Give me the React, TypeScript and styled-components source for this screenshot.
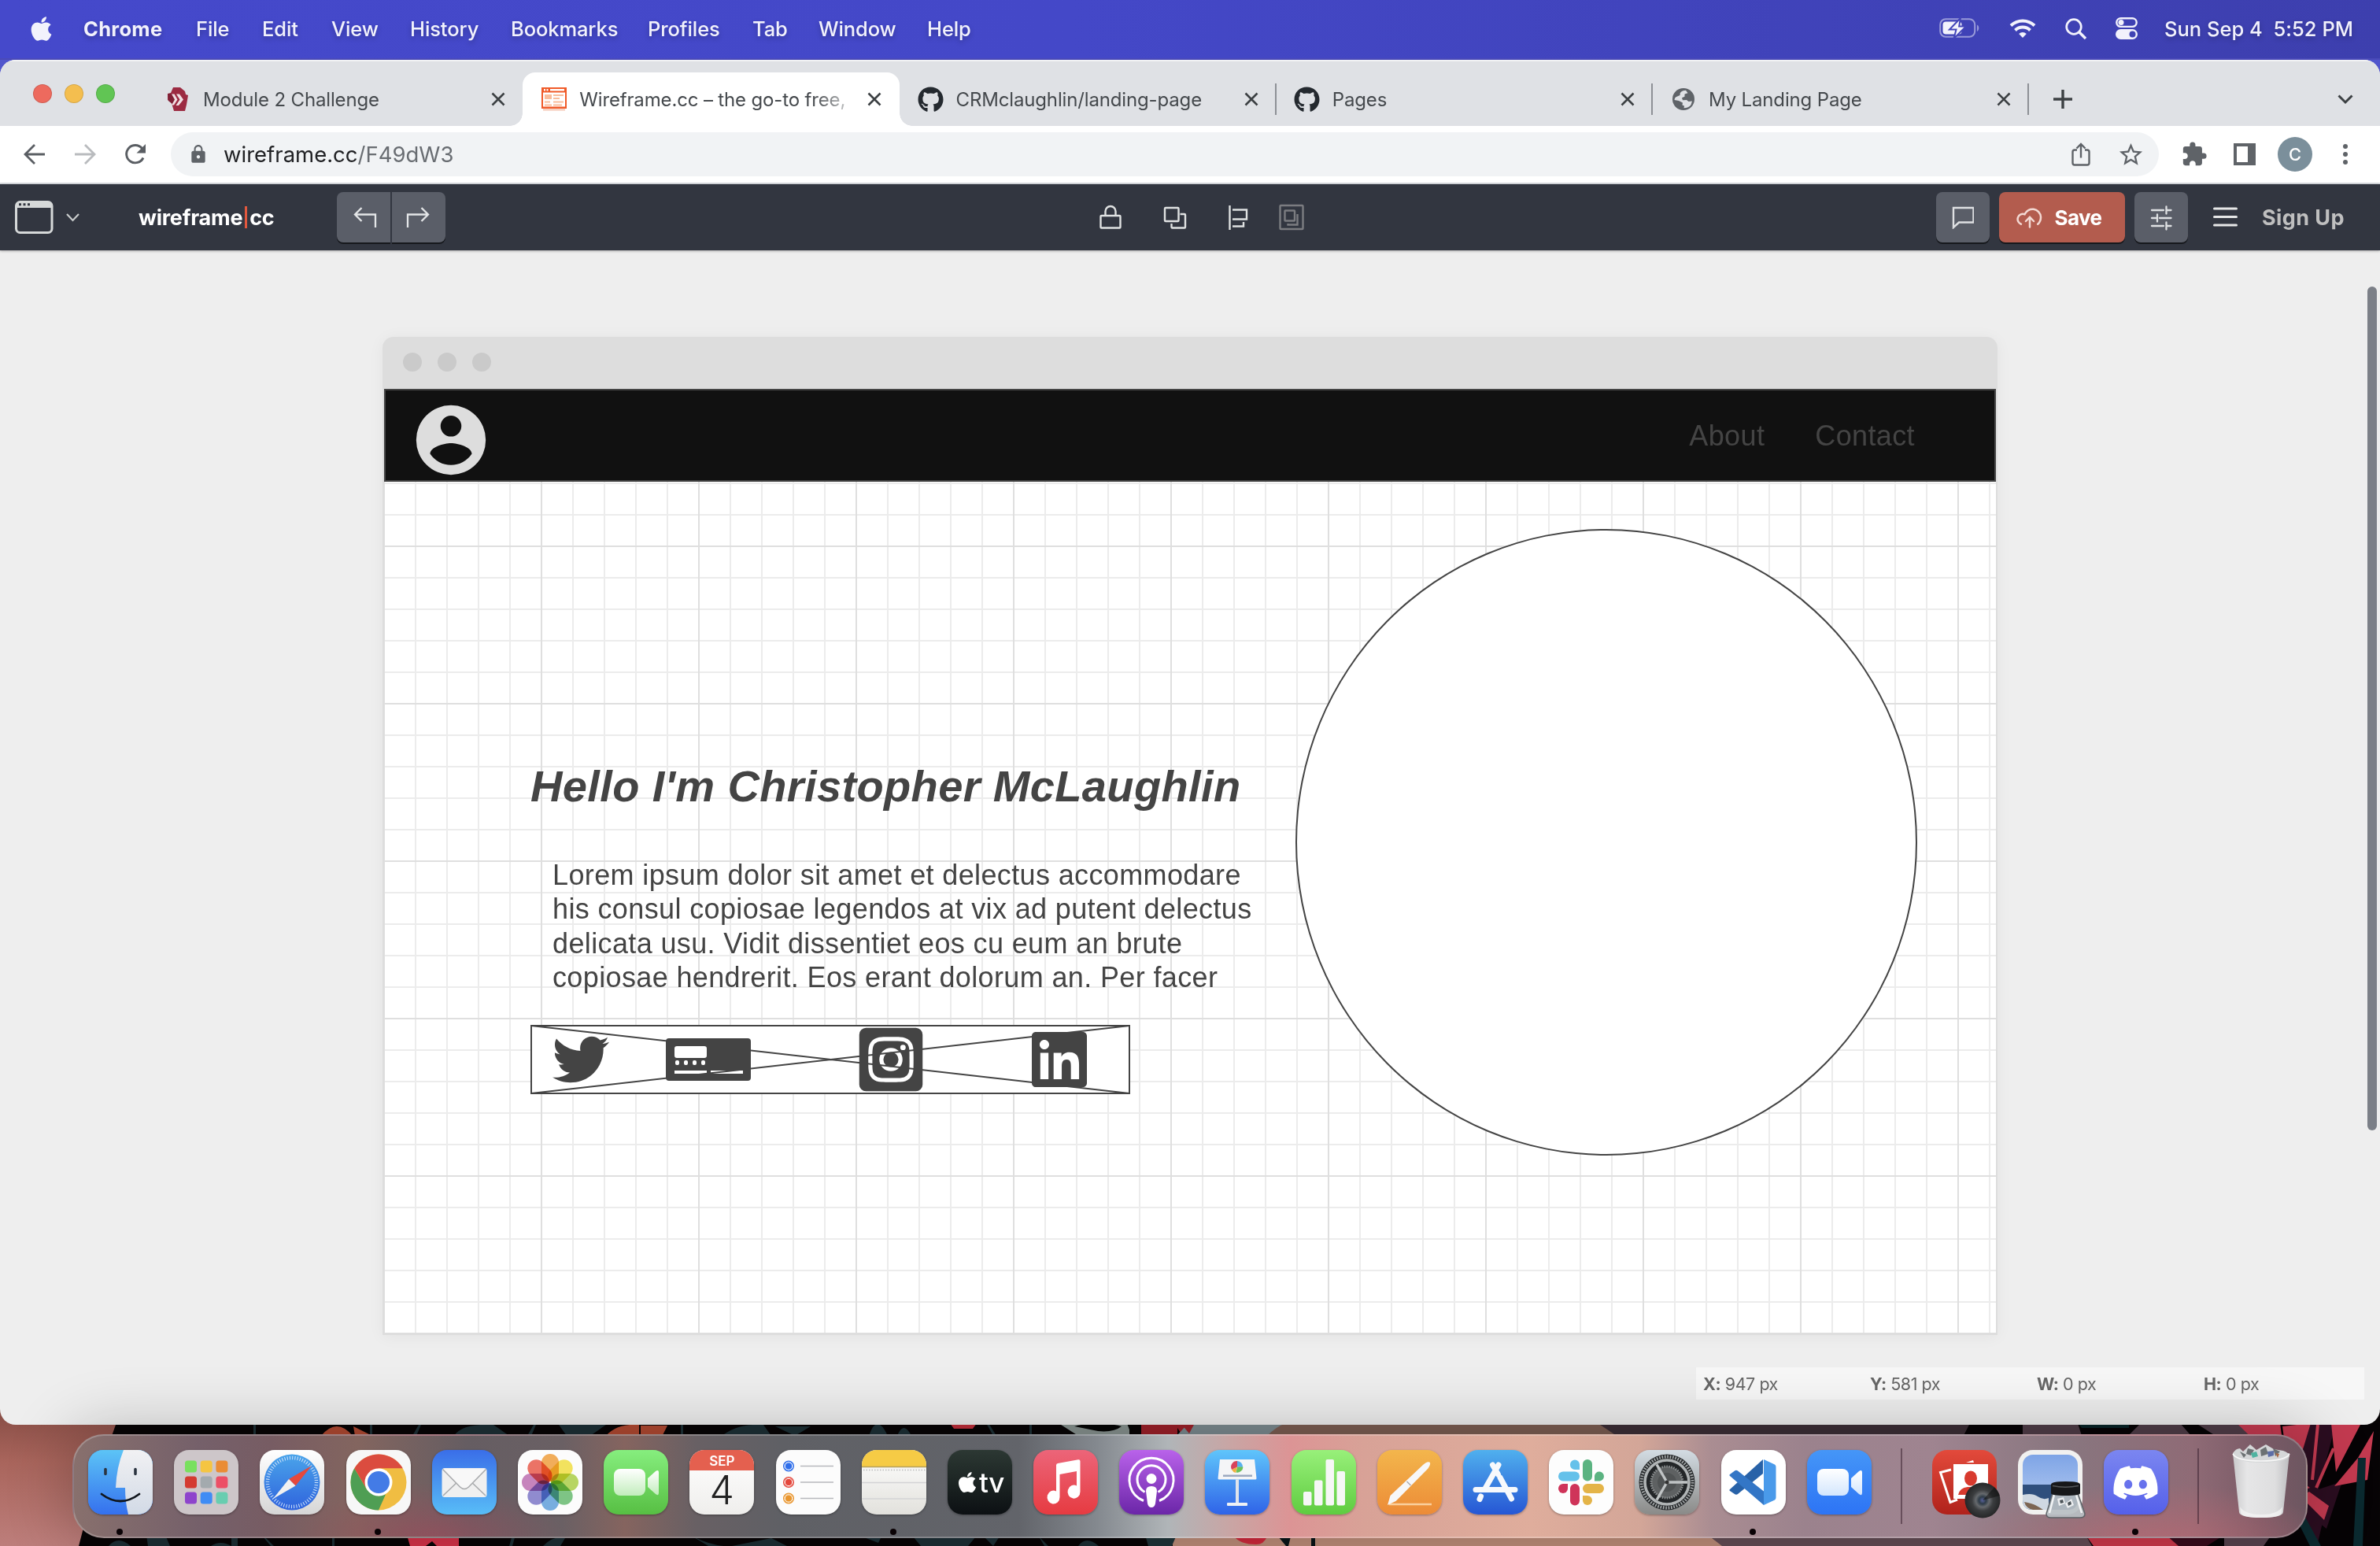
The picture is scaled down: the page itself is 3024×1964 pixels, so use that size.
import React from "react";
import styled, { createGlobalStyle } from "styled-components";
import { FaApple, FaGithub, FaTwitter, FaLinkedin, FaInstagramSquare, FaDiscord } from "react-icons/fa";
import { MdExtension, MdStarOutline, MdLock } from "react-icons/md";

const UI = `Inter, "Noto Sans", sans-serif`;
const ARIAL = `"Liberation Sans", Arial, sans-serif`;

const Global = createGlobalStyle`
  * { box-sizing: border-box; }
  html, body { margin: 0; padding: 0; overflow: hidden; }
  body { font-family: ${UI}; width: 3024px; height: 1964px; }
  svg { display: block; flex: none; }
`;

const Desktop = styled.div`
  position: relative;
  display: flex;
  flex-direction: column;
  width: 3024px;
  height: 1964px;
  overflow: hidden;
  background: #5055cc;
`;

const Wallpaper = styled.svg`
  position: absolute;
  left: 0;
  bottom: 0;
`;

/* ---------- menu bar ---------- */

const MenuBar = styled.header`
  display: flex;
  align-items: center;
  height: 76px;
  padding: 0 34px 2px 35px;
  flex: none;
  color: #f2f2fc;
  background: linear-gradient(90deg, #4549cb 0%, #4448c8 45%, #3d3fae 100%);
  border-bottom: 2px solid #4a4ab8;
  text-shadow: 0 3px 6px rgba(0, 0, 0, 0.25);
  font-size: 25.5px;
  font-weight: 500;
`;

const AppleSlot = styled.div`
  width: 71px;
`;

const MenuItem = styled.div<{ $w: number; $bold?: boolean }>`
  width: ${(p) => p.$w}px;
  font-weight: ${(p) => (p.$bold ? 700 : 500)};
  letter-spacing: ${(p) => (p.$bold ? "0.3px" : "-0.1px")};
  white-space: nowrap;
`;

const MenuSpacer = styled.div`
  flex: 1;
`;

const Tray = styled.div`
  display: flex;
  align-items: center;
  gap: 37px;
`;

const Clock = styled.div`
  width: 240px;
  margin-left: -3px;
  letter-spacing: 0.02px;
  white-space: pre;
`;

/* ---------- browser window ---------- */

const Browser = styled.section`
  position: relative;
  display: flex;
  flex-direction: column;
  height: 1734px;
  flex: none;
  overflow: hidden;
  border-radius: 20px;
  background: #eeeeee;
`;

const TabStrip = styled.div`
  display: flex;
  height: 84px;
  flex: none;
  background: #dfe1e5;
  border-top: 2px solid #f1f2f4;
  padding-top: 14px;
`;

const Lights = styled.div`
  display: flex;
  gap: 16px;
  width: 186px;
  padding: 15px 0 0 42px;
`;

const Light = styled.div<{ $c: string }>`
  width: 24px;
  height: 24px;
  border-radius: 50%;
  background: ${(p) => p.$c};
  border: 1px solid rgba(0, 0, 0, 0.12);
`;

const Tab = styled.div<{ $active?: boolean; $sep?: boolean }>`
  position: relative;
  display: flex;
  align-items: center;
  width: 478.25px;
  height: 68px;
  padding: 0 20px 0 23px;
  border-radius: 16px 16px 0 0;
  background: ${(p) => (p.$active ? "#fff" : "transparent")};
  color: #45494d;
  font-size: 24px;

  &::before,
  &::after {
    content: "";
    display: ${(p) => (p.$active || p.$sep ? "block" : "none")};
    position: absolute;
    bottom: ${(p) => (p.$active ? 0 : 14)}px;
    width: ${(p) => (p.$active ? 16 : 2)}px;
    height: ${(p) => (p.$active ? 16 : 40)}px;
  }
  &::before {
    left: -16px;
    background: ${(p) => (p.$active ? "radial-gradient(circle at 0 0, transparent 15.5px, #fff 16px)" : "none")};
  }
  &::after {
    right: ${(p) => (p.$active ? "-16px" : "-1px")};
    background: ${(p) => (p.$active ? "radial-gradient(circle at 100% 0, transparent 15.5px, #fff 16px)" : "#8d9096")};
  }
`;

const Favicon = styled.div`
  display: flex;
  justify-content: center;
  width: 34px;
  margin-right: 15px;
`;

const TabTitle = styled.div<{ $fade?: boolean }>`
  width: 345px;
  white-space: nowrap;
  letter-spacing: -0.15px;
  ${(p) => p.$fade && "-webkit-mask-image: linear-gradient(90deg, #000 86%, rgba(0, 0, 0, 0.3) 99%);"}
`;

const TabClose = styled.div`
  margin-left: 21px;
`;

const StripTail = styled.div`
  display: flex;
  flex: 1;
  justify-content: space-between;
  align-items: center;
  height: 68px;
  padding: 0 34px 0 32px;
`;

const NavBar = styled.div`
  display: flex;
  align-items: center;
  height: 74px;
  flex: none;
  background: #fff;
  border-bottom: 2px solid #d9dce0;
`;

const NavButtons = styled.div`
  display: flex;
  gap: 32px;
  width: 217px;
  padding-left: 28px;
`;

const Omnibox = styled.div`
  display: flex;
  align-items: center;
  width: 2526px;
  height: 56px;
  padding: 0 18px 0 22px;
  border-radius: 28px;
  background: #f1f3f5;
`;

const Url = styled.div`
  flex: 1;
  margin-left: 19px;
  font-size: 27.5px;
  color: #202124;
  letter-spacing: 0;
  span { color: #696d72; }
`;

const OmniActions = styled.div`
  display: flex;
  align-items: center;
  gap: 29px;
`;

const Extensions = styled.div`
  display: flex;
  align-items: center;
  gap: 26px;
  margin-left: 28px;
`;

const Avatar = styled.div`
  display: flex;
  align-items: center;
  justify-content: center;
  width: 44px;
  height: 44px;
  border-radius: 50%;
  background: #7b8f9b;
  color: #fff;
  font: 500 22px ${UI};
`;

/* ---------- wireframe.cc toolbar ---------- */

const AppBar = styled.div`
  display: flex;
  align-items: center;
  height: 84px;
  flex: none;
  padding: 0 46px 0 19px;
  background: #323640;
  box-shadow: 0 1px 3px rgba(0, 0, 0, 0.3);
  z-index: 1;
`;

const Cluster = styled.div<{ $ml?: number; $gap?: number }>`
  display: flex;
  align-items: center;
  margin-left: ${(p) => p.$ml || 0}px;
  gap: ${(p) => p.$gap || 0}px;
`;

const Brand = styled.div`
  display: flex;
  align-items: center;
  width: 252px;
  margin-left: 75px;
  color: #fff;
  font-size: 27px;
  font-weight: 700;
  letter-spacing: -0.25px;
`;

const Caret = styled.span`
  width: 3px;
  height: 28px;
  margin: 0 3px;
  background: #e2583e;
`;

const ToolButton = styled.div<{ $w: number; $bg?: string; $side?: "l" | "r"; $nudge?: number }>`
  display: flex;
  align-items: center;
  justify-content: center;
  gap: 15px;
  width: ${(p) => p.$w}px;
  height: 64px;
  padding-left: ${(p) => Math.max(p.$nudge || 0, 0)}px;
  padding-right: ${(p) => Math.max(-(p.$nudge || 0), 0)}px;
  background: ${(p) => p.$bg || "#5a5e68"};
  border-radius: ${(p) => (p.$side === "l" ? "8px 0 0 8px" : p.$side === "r" ? "0 8px 8px 0" : "8px")};
  box-shadow: 0 2px 0 #16181c;
  color: #fff;
  font-size: 26px;
  font-weight: 700;
  letter-spacing: -0.6px;
`;

const SignUp = styled.div`
  width: 104px;
  color: #bfbfbf;
  font-size: 27px;
  font-weight: 700;
  letter-spacing: 0.4px;
  white-space: nowrap;
`;

/* ---------- work area ---------- */

const Workspace = styled.div`
  position: relative;
  flex: 1;
  padding: 110px 486px 0 486px;
`;

const Frame = styled.div`
  width: 2052px;
  height: 1268px;
  border-radius: 14px 14px 0 0;
  background: #dddddd;
  box-shadow: 0 2px 20px rgba(0, 0, 0, 0.05);
  padding: 0 2px 2px;
`;

const FrameHead = styled.div`
  display: flex;
  align-items: center;
  gap: 20px;
  height: 66px;
  padding: 0 0 2px 24px;
`;

const FrameDot = styled.div`
  width: 24px;
  height: 24px;
  border-radius: 50%;
  background: #cacaca;
`;

const Canvas = styled.div`
  position: relative;
  height: 1200px;
  background-color: #fff;
  background-image: linear-gradient(90deg, #dfdfdf 2px, transparent 2px),
    linear-gradient(#dfdfdf 2px, transparent 2px), linear-gradient(90deg, #ececec 2px, transparent 2px),
    linear-gradient(#ececec 2px, transparent 2px);
  background-size: 200px 200px, 200px 200px, 40px 40px, 40px 40px;
  background-position: -1px -1px;
`;

const NavBlock = styled.div`
  position: relative;
  display: flex;
  align-items: center;
  height: 118px;
  padding: 12px 101px 0 30px;
  border: 2px solid #444;
  background: #111;
`;

const NavLinks = styled.div`
  display: flex;
  flex: 1;
  justify-content: flex-end;
  gap: 64px;
  padding-bottom: 11px;
  font: 36px ${ARIAL};
  letter-spacing: 0.38px;
  color: #444;
`;

const Placed = styled.div<{ $x: number; $y: number; $w: number; $h: number }>`
  position: absolute;
  left: ${(p) => p.$x}px;
  top: ${(p) => p.$y}px;
  width: ${(p) => p.$w}px;
  height: ${(p) => p.$h}px;
  color: #444;
`;

const Heading = styled.h1`
  margin: 0;
  font: italic bold 56px/64px ${ARIAL};
  letter-spacing: 0.37px;
  white-space: nowrap;
`;

const Copy = styled.p`
  margin: 0;
  font: 36px/43.3px ${ARIAL};
  letter-spacing: 0.37px;
  white-space: nowrap;
`;

const Portrait = styled.div`
  width: 100%;
  height: 100%;
  border: 2px solid #444;
  border-radius: 50%;
  background: #fff;
`;

const ScrollThumb = styled.div`
  position: absolute;
  right: 4px;
  top: 46px;
  width: 12px;
  height: 1072px;
  border-radius: 6px;
  background: #7b7f87;
`;

const StatusBar = styled.div`
  position: absolute;
  right: 20px;
  top: 1419px;
  display: flex;
  align-items: center;
  width: 849px;
  height: 41px;
  padding-left: 9px;
  background: rgba(255, 255, 255, 0.5);
  color: #666;
  font-size: 21.5px;
`;

const Stat = styled.div`
  width: 212px;
  flex: none;
  letter-spacing: -0.45px;
  b { font-weight: 700; }
  &:last-child { width: 180px; }
`;

/* ---------- dock ---------- */

const DockArea = styled.div`
  position: relative;
  display: flex;
  justify-content: center;
  flex: 1;
  padding: 12px 0 10px;
`;

const DockShelf = styled.div`
  display: flex;
  align-items: flex-start;
  gap: 27.2px;
  width: 2840px;
  height: 132px;
  padding: 18px 0 0 18px;
  border-radius: 40px;
  border: 2px solid rgba(255, 255, 255, 0.22);
  background: radial-gradient(ellipse 170px 70px at 455px 130px, rgba(150, 78, 92, 0.8), transparent),
    radial-gradient(ellipse 240px 80px at 2640px 140px, rgba(185, 104, 114, 0.8), transparent),
    linear-gradient(90deg, #88706d 0, #75606a 160px, #775c63 250px, #83655f 360px, #655d62 500px, #6a6064 620px,
      #85645f 700px, #686064 790px, #5f6065 900px, #62646a 1200px, #84898f 1300px, #b0b5b8 1390px, #c9a5a4 1470px,
      #dc9495 1545px, #d8a297 1640px, #dfad9c 1850px, #d3a698 1990px, #aa8d92 2080px, #9b828d 2200px, #9f8490 2360px,
      #88767f 2530px, #8f6b76 2690px, #7a5a66 2780px, #6c5660 2840px);
  box-shadow: 0 0 80px 6px rgba(0, 0, 0, 0.24);
`;

const DockSlot = styled.div<{ $running?: boolean }>`
  position: relative;
  width: 82px;
  height: 110px;
  flex: none;
  &::after {
    content: "";
    display: ${(p) => (p.$running ? "block" : "none")};
    position: absolute;
    left: 36px;
    bottom: 2px;
    width: 8px;
    height: 8px;
    border-radius: 50%;
    background: #0a0205;
  }
`;

const Tile = styled.div<{ $bg: string }>`
  display: flex;
  align-items: center;
  justify-content: center;
  width: 82px;
  height: 82px;
  border-radius: 19px;
  background: ${(p) => p.$bg};
  overflow: hidden;
  box-shadow: 0 1px 3px rgba(0, 0, 0, 0.35);
  color: #fff;
`;

const DockRule = styled.div`
  width: 2px;
  height: 96px;
  flex: none;
  margin: -2px 10.2px 0;
  background: rgba(50, 25, 40, 0.5);
`;

const Calendar = styled.div`
  display: flex;
  flex-direction: column;
  align-items: center;
  width: 82px;
  height: 82px;
`;

const Month = styled.div`
  width: 82px;
  height: 26px;
  padding-top: 2px;
  background: #e4604f;
  color: #fff;
  font: 600 17px/24px ${UI};
  text-align: center;
`;

const Day = styled.div`
  color: #222;
  font: 300 50px/51px ${UI};
`;

const TvMark = styled.div`
  display: flex;
  align-items: center;
  font: 500 35px/40px ${UI};
  letter-spacing: -0.5px;
`;

/* ---------- small glyphs ---------- */

const CloseX = () => (
  <svg width="18" height="18" viewBox="0 0 18 18" stroke="#3c4043" strokeWidth="2.6" fill="none">
    <path d="M1.5 1.5 16.5 16.5M16.5 1.5 1.5 16.5" />
  </svg>
);

const Battery = () => (
  <svg width="52" height="28" viewBox="0 0 52 28">
    <rect x="1.2" y="2.2" width="44" height="22.6" rx="7" fill="none" stroke="#f2f2fc" strokeOpacity=".5" strokeWidth="2" />
    <path d="M48 9.500c3 1.200 3 7 0 8.500z" fill="#f2f2fc" fillOpacity=".5" />
    <rect x="4.500" y="5.500" width="24" height="16" rx="4" fill="#f2f2fc" />
    <path d="M27 1 13 15.500h8.500L18.500 27 34 11.500h-8.800z" fill="#f2f2fc" stroke="#4244b8" strokeWidth="2" />
  </svg>
);

const Wifi = () => (
  <svg width="34" height="26" viewBox="0 0 34 26" fill="none" stroke="#f2f2fc" strokeWidth="4">
    <path d="M2 9.500a21.500 21.500 0 0 1 30 0" />
    <path d="M7.500 15.500a13.500 13.500 0 0 1 19 0" />
    <path d="m17 25-4.800-5a6.800 6.800 0 0 1 9.600 0z" fill="#f2f2fc" stroke="none" />
  </svg>
);

const Search = () => (
  <svg width="27" height="27" viewBox="0 0 27 27" fill="none" stroke="#f2f2fc" strokeWidth="2.700">
    <circle cx="11" cy="11" r="9.300" />
    <path d="m17.500 17.500 8.500 8.500" strokeWidth="3.400" />
  </svg>
);

const Control = () => (
  <svg width="28" height="28" viewBox="0 0 28 28">
    <rect x="1.300" y="1.300" width="25.400" height="10.600" rx="5.300" fill="none" stroke="#f2f2fc" strokeWidth="2.400" />
    <circle cx="7" cy="6.600" r="3.500" fill="#f2f2fc" />
    <rect x="0" y="15" width="28" height="13" rx="6.500" fill="#f2f2fc" />
    <circle cx="21.500" cy="21.500" r="4" fill="#4043b4" />
  </svg>
);

const ModuleIcon = () => (
  <svg width="28" height="30" viewBox="0 0 28 30">
    <path d="M8 0h9l6 5 1 4 3 1-2 12-2 8H9L6 20 1 16V8l4-1z" fill="#9c2b42" />
    <path d="M1 8h6l6 7-6 6-5-4z" fill="#7f2136" />
    <path d="M6 8.500h3.500l4 7L9 22.500H6l4-7zM12 8.500h4l5 7-6 7.500h-3.500l5-7.500z" fill="#f0dfe3" />
  </svg>
);

const WireIcon = () => (
  <svg width="32" height="30" viewBox="0 0 32 30">
    <rect x="1" y="1" width="30" height="25" fill="#fff" stroke="#f05a28" strokeWidth="2" />
    <rect width="32" height="6.500" fill="#f05a28" />
    <path d="M3 2h2v2.500H3zM6.500 2h2v2.500h-2zM11 2h18v2.500H11z" fill="#fff" />
    <path d="M4 9h9v6H4zM15 9h13v2H15zM15 13h8v2h-8zM4 17.500h7v2H4zM15 17.500h13v2H15zM4 21.500h9v2H4zM15 21.500h11v2H15z" fill="#f9bd9c" />
    <rect x="0" y="24.500" width="32" height="2.500" fill="#f05a28" />
    <rect x="2" y="27.500" width="28" height="2" fill="#f5c6b2" />
  </svg>
);

const Globe = () => (
  <svg width="28" height="28" viewBox="0 0 28 28">
    <circle cx="14" cy="14" r="14" fill="#5f6368" />
    <path
      d="M17 2.800Q9 3 9.500 9l-4.500 2q-2 .5-2.500 4l5.500 1 5 2.500-.500 3 2.500 1-.5 2.700q6 0 9-4l1.500-4.700-4.500.5-2.500-2-5 .200-1-3 3.500-1.500V7.500l4-1.200z"
      fill="#dfe1e5"
    />
  </svg>
);

const BackArrow = ({ c, flip }: { c: string; flip?: boolean }) => (
  <svg width="32" height="32" viewBox="0 0 32 32" fill="none" stroke={c} strokeWidth="2.800" transform={flip ? "scale(-1 1)" : undefined}>
    <path d="M29 16H4.500M16 4 4 16l12 12" />
  </svg>
);

const Reload = () => (
  <svg width="32" height="32" viewBox="0 0 32 32" fill="none" stroke="#5a5e63" strokeWidth="2.900">
    <path d="M26 20.500A11.200 11.200 0 1 1 24.500 8.500" />
    <path d="M29 3v11.500H17.500z" fill="#5a5e63" stroke="none" />
  </svg>
);

const Share = () => (
  <svg width="34" height="34" viewBox="0 0 34 34" fill="none" stroke="#5f6368" strokeWidth="2.400">
    <path d="M12 11.500H9a2.500 2.500 0 0 0-2.500 2.500v14A2.500 2.500 0 0 0 9 30.500h16a2.500 2.500 0 0 0 2.500-2.500V14a2.500 2.500 0 0 0-2.500-2.500h-3M17 21.500V4.500M11.500 9.500 17 4l5.500 5.500" />
  </svg>
);

const SidePanel = () => (
  <svg width="28" height="28" viewBox="0 0 28 28">
    <path d="M0 0h28v28H0zM4 4v20h14V4z" fill="#5f6368" fillRule="evenodd" />
  </svg>
);

const Dots = () => (
  <svg width="6" height="28" viewBox="0 0 6 28" fill="#5f6368">
    <circle cx="3" cy="4" r="3" />
    <circle cx="3" cy="14" r="3" />
    <circle cx="3" cy="24" r="3" />
  </svg>
);

const FrameIcon = () => (
  <svg width="49" height="42" viewBox="0 0 49 42">
    <rect x="1.500" y="1.500" width="45.500" height="39" rx="5" fill="none" stroke="#d6d9d9" strokeWidth="3" />
    <path d="M1 8a6 6 0 0 1 5-7h36a6 6 0 0 1 6 7v1H1z" fill="#d6d9d9" />
    <path d="M5 3.200h3v3H5zM10.500 3.200h3v3h-3zM16 3.200h3v3h-3z" fill="#323640" />
  </svg>
);

const Undo = ({ flip }: { flip?: boolean }) => (
  <svg width="30" height="30" viewBox="0 0 30 30" fill="none" stroke="#e4e6e8" strokeWidth="2.300" transform={flip ? "scale(-1 1)" : undefined}>
    <path d="M10.500 3 2 11.500l8.500 8.500M2 11.500h26V28" />
  </svg>
);

const LockGlyph = () => (
  <svg width="30" height="32" viewBox="0 0 30 32" fill="none" stroke="#e0e2e2" strokeWidth="2.400">
    <rect x="2.500" y="14" width="25" height="15.500" rx="1" />
    <path d="M8.500 14V8.500a6.500 6.500 0 0 1 13 0V14" />
  </svg>
);

const LayersGlyph = () => (
  <svg width="30" height="32" viewBox="0 0 30 32" fill="none" stroke="#e0e2e2" strokeWidth="2.400">
    <rect x="2" y="4" width="17.500" height="17" rx="1" />
    <path d="M21.500 12H27q1 0 1 1v15.500q0 1-1 1H11.500q-1 0-1-1V24" />
  </svg>
);

const AlignGlyph = () => (
  <svg width="26" height="34" viewBox="0 0 26 34" fill="none" stroke="#e0e2e2" strokeWidth="2.400">
    <path d="M2.500 2v31M6 7.500h18v12H6M6 28.500h14V23" />
  </svg>
);

const GroupGlyph = () => (
  <svg width="32" height="34" viewBox="0 0 32 34" fill="none" stroke="#7b7c80" strokeWidth="2.400">
    <rect x="1.500" y="2" width="29" height="30" rx="1" />
    <rect x="7.500" y="8.500" width="12.500" height="13" rx=".5" />
    <path d="M23.500 13v13.500h-12V25" />
  </svg>
);

const CommentGlyph = () => (
  <svg width="28" height="30" viewBox="0 0 28 30" fill="none" stroke="#dfe1e3" strokeWidth="2.400">
    <path d="M2.500 3.500H28V22H9.500l-7 6.500z" transform="translate(-.5 -.5)" />
  </svg>
);

const CloudGlyph = () => (
  <svg width="34" height="30" viewBox="0 0 34 30" fill="none" stroke="#f3d9d3" strokeWidth="2.500" strokeLinecap="round">
    <path d="M6 23.700A6.600 6.600 0 0 1 10.500 11.200 10.700 10.700 0 0 1 31 14.500q.2 6-3.800 9.200M17 27.500V15M12 20l5-5.200 5 5.200" />
  </svg>
);

const SlidersGlyph = () => (
  <svg width="32" height="34" viewBox="0 0 32 34" fill="none" stroke="#dfe1e3" strokeWidth="2.300" strokeLinecap="round">
    <path d="M4 8h15M24 8h4.500M22.500 3.500v9M4 18h6M14 18h14.500M11 13.500v9M4 28h15M24 28h4.500M22.500 23.500v9" />
  </svg>
);

const Burger = () => (
  <svg width="31" height="26" viewBox="0 0 31 26" fill="#e6e7e7">
    <rect y="0.500" width="31" height="3" rx="1.500" />
    <rect y="11" width="31" height="3" rx="1.500" />
    <rect y="21.500" width="31" height="3" rx="1.500" />
  </svg>
);

const AccountBadge = () => (
  <svg width="106" height="106" viewBox="0 0 24 24" fill="#dddddd">
    <path
      fillRule="evenodd"
      d="M12 2a10 10 0 1 0 0 20 10 10 0 0 0 0-20zm0 3a3 3 0 1 1 0 6 3 3 0 0 1 0-6zm0 14.200a7.200 7.200 0 0 1-6-3.220c.03-1.990 4-3.080 6-3.080s5.970 1.090 6 3.080a7.200 7.200 0 0 1-6 3.220z"
    />
  </svg>
);

/* ---------- dock pictures ---------- */

const Finder = () => (
  <svg width="82" height="82" viewBox="0 0 82 82">
    <defs>
      <linearGradient id="fb" x2="0" y2="1"><stop stopColor="#5cc4f6" /><stop offset="1" stopColor="#3570ee" /></linearGradient>
      <linearGradient id="fw" x2="0" y2="1"><stop stopColor="#f1f1f3" /><stop offset="1" stopColor="#d2dae6" /></linearGradient>
    </defs>
    <rect width="82" height="82" fill="url(#fb)" />
    <path d="M45 0Q36 22 35 48h12q0 18 4 34h31V0z" fill="url(#fw)" />
    <path d="M22 24.500v6M60 24.500v6" stroke="#2b3440" strokeWidth="3.600" strokeLinecap="round" />
    <path d="M17 56q24 18 48 0" fill="none" stroke="#10151c" strokeWidth="2.800" strokeLinecap="round" />
  </svg>
);

const Launchpad = () => {
  const colors = ["#79e05e", "#f5c542", "#ea8c35", "#d43a30", "#a3aaae", "#ec4f66", "#8e44cc", "#3f8cf5", "#68cdb0"];
  return (
    <svg width="82" height="82" viewBox="0 0 82 82">
      {colors.map((c, i) => (
        <rect key={c} x={14 + (i % 3) * 19.700} y={13.500 + Math.floor(i / 3) * 20} width="15" height="15" rx="3.500" fill={c} />
      ))}
    </svg>
  );
};

const Safari = () => (
  <svg width="82" height="82" viewBox="0 0 82 82">
    <defs><linearGradient id="sf" x2="0" y2="1"><stop stopColor="#4aa4ea" /><stop offset="1" stopColor="#2f63dd" /></linearGradient></defs>
    <circle cx="41" cy="41" r="35.500" fill="url(#sf)" />
    <circle cx="41" cy="41" r="31" fill="none" stroke="#cfe3fa" strokeWidth="4.500" strokeDasharray="1 2.246" />
    <path d="M66 20 45.500 45.500 37 37z" fill="#e5483d" />
    <path d="M17 62 37 37l8.500 8.500z" fill="#f1f1f1" />
  </svg>
);

const Chrome = () => (
  <svg width="82" height="82" viewBox="0 0 82 82">
    <circle cx="41" cy="41" r="35.500" fill="#f0bd42" />
    <path d="M41 76.500A35.500 35.500 0 0 1 10.300 23.200L26 50l15 8.500 9-2z" fill="#4f9e54" />
    <path d="M10.300 23.200A35.500 35.500 0 0 1 71.700 23.200H41L25 48z" fill="#db4c3f" />
    <circle cx="41" cy="41" r="17.500" fill="#fff" />
    <circle cx="41" cy="41" r="14" fill="#437be6" />
  </svg>
);

const Mail = () => (
  <svg width="82" height="82" viewBox="0 0 82 82">
    <rect x="12.500" y="23" width="57" height="37" rx="3.500" fill="#f0f0f0" />
    <g fill="none" stroke="#a9abad" strokeWidth="1.600">
      <path d="m14 58 21-20M68 58 47 38" />
      <path d="m13.500 24.500 22 22.500q5.500 5 11 0l22-22.500" fill="#f8f8f8" />
    </g>
  </svg>
);

const Petal = styled.rect`
  mix-blend-mode: multiply;
`;

const Photos = () => {
  const petals = ["#f19e38", "#f3df3c", "#a9cf42", "#63bb6c", "#5b9edc", "#7a74c8", "#bd6bb0", "#ea5545"];
  return (
    <svg width="82" height="82" viewBox="0 0 82 82">
      {petals.map((c, i) => (
        <Petal key={c} x="30" y="5" width="22" height="35" rx="11" fill={c} fillOpacity=".82" transform={`rotate(${i * 45} 41 41)`} />
      ))}
    </svg>
  );
};

const Camera = ({ top, bottom, id }: { top: string; bottom: string; id: string }) => (
  <svg width="82" height="82" viewBox="0 0 82 82">
    <defs><linearGradient id={id} x2="0" y2="1"><stop stopColor={top} /><stop offset="1" stopColor={bottom} /></linearGradient></defs>
    <rect x="13" y="24" width="40" height="34" rx="8" fill={`url(#${id})`} />
    <path d="m56 36 10-9q4-3 4 2v25q0 5-4 2l-10-9z" fill={`url(#${id})`} />
  </svg>
);

const Reminders = () => (
  <svg width="82" height="82" viewBox="0 0 82 82">
    {["#2f6eea", "#e4473b", "#e9962f"].map((c, i) => (
      <g key={c}>
        <circle cx="16" cy={20.500 + i * 20.500} r="5.500" fill={c} />
        <circle cx="16" cy={20.500 + i * 20.500} r="4.700" fill="none" stroke="#fff" strokeWidth="1" />
        <circle cx="16" cy={20.500 + i * 20.500} r="6.400" fill="none" stroke={c} strokeWidth="1.300" />
        <path d={`M31 ${20.500 + i * 20.500}H73`} stroke="#b7b8bd" strokeWidth="1.500" />
      </g>
    ))}
  </svg>
);

const Notes = () => (
  <svg width="82" height="82" viewBox="0 0 82 82">
    <rect width="82" height="21" fill="#f6cb45" />
    <path d="M0 21.500h82" stroke="#b7a15c" strokeWidth="1.500" />
    <path d="M2 25.500h80" stroke="#bbb" strokeWidth="1.500" strokeDasharray="1.500 2" />
    <path d="M0 41.500h82M0 62h82" stroke="#d3d3d5" strokeWidth="1.500" />
  </svg>
);

const Music = () => (
  <svg width="82" height="82" viewBox="0 0 82 82" fill="#fff">
    <path d="M29 19.500q0-2 2-2.400l26-4.800q2.500-.3 2.500 2V53a8 8.500 0 1 1-4.500-7.500V27L33.500 31v29a8 8.500 0 1 1-4.500-7.600z" />
  </svg>
);

const Podcasts = () => (
  <svg width="82" height="82" viewBox="0 0 82 82" fill="none" stroke="#fff" strokeWidth="3">
    <path d="M31 64.500a28 28 0 1 1 20 0" />
    <path d="M32.500 53.500a18 18 0 1 1 17 0" />
    <circle cx="41" cy="36.500" r="6.500" fill="#fff" stroke="none" />
    <path d="M34 52q0-6 7-6t7 6l-2 16q-1 5-5 5t-5-5z" fill="#fff" stroke="none" />
  </svg>
);

const Keynote = () => (
  <svg width="82" height="82" viewBox="0 0 82 82">
    <path d="m19 12-2.500 24q0 1.500 1.500 1.500h46q1.500 0 1.500-1.500L63 12z" fill="#f4f5f7" />
    <path d="M23 31.500h37v2.500H23z" fill="#9ba9c0" />
    <path d="M41 21.500V14a7.500 7.500 0 0 1 7 8z" fill="#57b0ee" />
    <path d="M41 21.500h7.500a7.500 7.500 0 0 1-9 7z" fill="#6cc15a" />
    <path d="M41 21.500 39 29a7.500 7.500 0 0 1-5-4z" fill="#f0b03f" />
    <path d="M41 21.500 34 25a7.500 7.500 0 0 1 7-11z" fill="#d8435a" />
    <path d="M39 37.500h4V68h-4z" fill="#dfe4ec" />
    <rect x="28" y="67" width="26" height="4" rx="1" fill="#eef1f5" />
  </svg>
);

const Numbers = () => (
  <svg width="82" height="82" viewBox="0 0 82 82" fill="#f6f7f6">
    <rect x="15" y="53" width="10.500" height="17.500" rx="2" />
    <rect x="29" y="38.500" width="10.500" height="32" rx="2" />
    <rect x="43.500" y="12" width="10.500" height="58.500" rx="2" />
    <rect x="57.500" y="27" width="10.500" height="43.500" rx="2" />
  </svg>
);

const Pages = () => (
  <svg width="82" height="82" viewBox="0 0 82 82">
    <path d="M15 69h54" stroke="#f9cf9d" strokeWidth="2.500" />
    <path d="m13 70 3.500-12L58 19q5-5 8.500-3.500 2 2.500-2 8L23.500 65z" fill="#f7f7f8" />
    <path d="m37.500 40 5 5" stroke="#a9a9ad" strokeWidth="1.500" />
  </svg>
);

const AppStore = () => (
  <svg width="82" height="82" viewBox="0 0 82 82" fill="none" stroke="#f7f9fc" strokeWidth="7" strokeLinecap="round">
    <path d="M45 19 28 49M16 50.500h50M22.500 59l-1.500 3.500M37.500 19l7 12M47 35l14.500 27" />
  </svg>
);

const Slack = () => (
  <svg width="82" height="82" viewBox="0 0 82 82">
    <path d="M27 18.500a6 6 0 1 1 12 0V25h-6a6 6 0 0 1-6-6.500z" fill="#65c1ea" />
    <rect x="12" y="27.500" width="27" height="12" rx="6" fill="#65c1ea" />
    <rect x="43" y="12" width="12" height="27.500" rx="6" fill="#5bb381" />
    <path d="M58 39.500V33a6 6 0 1 1 6 6.500z" fill="#5bb381" />
    <path d="M24 43v6a6 6 0 1 1-6-6z" fill="#cf3459" />
    <rect x="27" y="43" width="12" height="27.500" rx="6" fill="#cf3459" />
    <rect x="43" y="43" width="27" height="12" rx="6" fill="#e4b448" />
    <path d="M43 58h6a6 6 0 1 1-6 6z" fill="#e4b448" />
  </svg>
);

const Settings = () => (
  <svg width="82" height="82" viewBox="0 0 82 82" fill="none">
    <circle cx="41" cy="41" r="35.500" fill="#232628" />
    <circle cx="41" cy="41" r="32.500" stroke="#a2a6a7" strokeWidth="4" strokeDasharray="1.700 1.703" />
    <circle cx="41" cy="41" r="28" stroke="#b0b4b5" strokeWidth="3.600" />
    <circle cx="41" cy="41" r="20" fill="#5e6162" stroke="#8d9192" strokeWidth="3" strokeDasharray="1.500 1.500" />
    <circle cx="41" cy="41" r="12" fill="#505354" />
    <path d="M41 41h26M41 41 28 18.500M41 41 28 63.500" stroke="#c0c4c5" strokeWidth="3.400" />
    <circle cx="41" cy="41" r="2.500" fill="#333" />
  </svg>
);

const Code = () => (
  <svg width="82" height="82" viewBox="0 0 82 82">
    <path d="M11 50 53 12v18L21 56q-2 1.500-4 0l-6-4q-1.500-1 0-2z" fill="#2862a8" />
    <path d="M11 33q-1.500-1 0-2l6-4.500q2-1.500 4 0l33 26V70z" fill="#3376c6" />
    <path d="m54 12 14 6.500q1.500 1 1.500 3v39q0 2-1.500 3L54 70q-.5-1 0-2z" fill="#4a9aea" />
  </svg>
);

const PhotoBooth = () => (
  <svg width="92" height="88" viewBox="0 0 92 88">
    <defs>
      <linearGradient id="pb" x2="0" y2="1"><stop stopColor="#e34a3b" /><stop offset="1" stopColor="#b0221b" /></linearGradient>
      <radialGradient id="ln"><stop stopColor="#57619a" /><stop offset=".2" stopColor="#2f3c48" /><stop offset=".38" stopColor="#66696d" /><stop offset=".6" stopColor="#3b3d3f" /><stop offset="1" stopColor="#252627" /></radialGradient>
    </defs>
    <rect width="82" height="82" rx="19" fill="url(#pb)" />
    <path d="M24 25 10.500 28.500 23 66.500l9-3.500" fill="none" stroke="#fff" strokeWidth="3" />
    <path d="m43 16 9-3 1 3z" fill="#fff" />
    <rect x="27" y="18" width="44" height="44" fill="#fff" />
    <ellipse cx="49" cy="36" rx="8" ry="9.500" fill="#d83a2e" />
    <path d="M33 57q2-9 12-10h8q8 1 11 10z" fill="#d83a2e" />
    <circle cx="64" cy="64" r="22.500" fill="url(#ln)" />
    <path d="m64 64 15-16.500A22.500 22.500 0 0 1 86 58z" fill="#111" fillOpacity=".55" />
  </svg>
);

const Preview = () => (
  <svg width="88" height="88" viewBox="0 0 88 88">
    <defs><linearGradient id="pv" x2="0" y2="1"><stop stopColor="#7ea4e6" /><stop offset="1" stopColor="#b7cdf1" /></linearGradient></defs>
    <rect width="82" height="82" rx="19" fill="#f1f1f0" />
    <rect x="6" y="6" width="70" height="70" rx="13" fill="url(#pv)" />
    <path d="M6 44h70v19q0 13-13 13H19Q6 76 6 63z" fill="#2f4f7d" />
    <path d="M6 57q12-3 19 2t14 2v15H19Q6 76 6 63z" fill="#cfd8e2" />
    <path d="M8 66q10 2 14 4t10 6H19Q10 74 8 66z" fill="#7c6553" />
    <path d="M44 55h32l9 26q0 5-6 5H42q-6 0-6-5z" fill="#b9bfc3" fillOpacity=".92" stroke="#5e6367" strokeWidth="1.500" />
    <path d="M46 57 40 80M74 57l7 23" stroke="#f2f4f5" strokeWidth="2.500" />
    <path d="m50 62 8-2 2 8-8 3zM60 68l8-6 3 8-8 4z" fill="#eceef0" />
    <path d="m53 64 4-1 1 4-4 1zM63 67l4-2 1 4-4 2z" fill="#4b5358" />
    <path d="M42 44q0-4 18.500-4T79 44v11q0 3-18.500 3T42 55z" fill="#17181a" />
    <path d="M44 45.500q16 3.500 33 0" fill="none" stroke="#55585b" strokeWidth="1.500" />
  </svg>
);

const Trash = () => (
  <svg width="82" height="96" viewBox="0 0 82 96">
    <defs><linearGradient id="tr" x2="1" y2="0"><stop stopColor="#c9c9cb" /><stop offset=".25" stopColor="#e6e6e7" /><stop offset=".75" stopColor="#dededf" /><stop offset="1" stopColor="#bdbdc0" /></linearGradient></defs>
    <path d="M5 12h72l-8 75q-1 7-28 7t-28-7z" fill="url(#tr)" />
    <path d="M5 12q4-6 9-6l4 4 9-9 8 7 12-7 10 6 12 2q7 2 8 7-5 8-36 8T5 14z" fill="#d5d7d8" />
    <path d="m14 10 8 4-3 4zM24 6l8 2-4 7-6-2zM40 8l7-4 3 9-9 3zM56 6l9 4-6 6z" fill="#6c7173" />
    <path d="m28 12 7-2 2 6-7 2z" fill="#4fb3a0" /><path d="m49 10 8-1v6l-7 2z" fill="#5d6ea6" /><path d="m59 12 5 1-2 5z" fill="#a86845" />
    <path d="M5 13q5 9 36 9t36-9" fill="none" stroke="#f8f8f8" strokeWidth="1.600" />
    <path d="M14 80q6 10 27 10t27-10l-1 8q-2 6-26 6t-26-6z" fill="#f7f7f7" fillOpacity=".7" />
  </svg>
);

type DockApp = { id: string; bg?: string; art: React.ReactNode; running?: boolean; rule?: boolean };

const dockApps: DockApp[] = [
  { id: "finder", bg: "#3f8ef0", art: <Finder />, running: true },
  { id: "launchpad", bg: "#cdc6c9", art: <Launchpad /> },
  { id: "safari", bg: "linear-gradient(#fff,#d6d6d6)", art: <Safari /> },
  { id: "chrome", bg: "#f7f7f7", art: <Chrome />, running: true },
  { id: "mail", bg: "linear-gradient(#3a6ee8,#58bdf7)", art: <Mail /> },
  { id: "photos", bg: "#fcfcfc", art: <Photos /> },
  { id: "facetime", bg: "linear-gradient(#86ee7e,#57bf43)", art: <Camera id="ft" top="#fff" bottom="#c2edbc" /> },
  { id: "calendar", bg: "linear-gradient(#fff,#efeeec)", art: <Calendar><Month>SEP</Month><Day>4</Day></Calendar> },
  { id: "reminders", bg: "#fcfcfc", art: <Reminders /> },
  { id: "notes", bg: "linear-gradient(#fff,#e2e1dc)", art: <Notes />, running: true },
  { id: "tv", bg: "linear-gradient(#2c3833,#0c1013)", art: <TvMark><FaApple size={30} />tv</TvMark> },
  { id: "music", bg: "linear-gradient(#ec6579,#e63b41)", art: <Music /> },
  { id: "podcasts", bg: "linear-gradient(#b962ea,#6b26a8)", art: <Podcasts /> },
  { id: "keynote", bg: "linear-gradient(#5fc5fb,#2f63e8)", art: <Keynote /> },
  { id: "numbers", bg: "linear-gradient(#98f07a,#5fcc40)", art: <Numbers /> },
  { id: "pages", bg: "linear-gradient(#f3b64c,#ec8b37)", art: <Pages /> },
  { id: "appstore", bg: "linear-gradient(#50b0ee,#2656d4)", art: <AppStore /> },
  { id: "slack", bg: "#fdfdfd", art: <Slack /> },
  { id: "settings", bg: "linear-gradient(#d3dce3,#8a8a88)", art: <Settings /> },
  { id: "code", bg: "#fff", art: <Code />, running: true },
  { id: "zoom", bg: "linear-gradient(#4596f7,#2d74f5)", art: <Camera id="zm" top="#fff" bottom="#d3e6fd" /> },
  { id: "rule-1", rule: true, art: null },
  { id: "photobooth", art: <PhotoBooth /> },
  { id: "preview", art: <Preview /> },
  { id: "discord", bg: "linear-gradient(#7b86f0,#5560ea)", art: <FaDiscord size={61} />, running: true },
  { id: "rule-2", rule: true, art: null },
  { id: "trash", art: <Trash /> },
];

const TrashLift = styled.div`
  margin-top: -8px;
`;

const WallpaperArt = () => (
  <Wallpaper width="3024" height="194" viewBox="0 1770 3024 194">
    <defs>
      <linearGradient id="sal" x2="0" y2="1"><stop stopColor="#7c453e" /><stop offset=".45" stopColor="#a9655c" /><stop offset="1" stopColor="#bd7e7b" /></linearGradient>
    </defs>
    <rect y="1770" width="3024" height="194" fill="#070405" />
    <path d="M0 1770h160l-13 40-25 70-22 84H0z" fill="url(#sal)" />
    <g fill="#b24a32">
      <path d="M408 1824q20-24 40 0zM449 1812l24 12h-22zM770 1824q14-16 42-14v14zM814 1811h34l-6 12h-28z" />
    </g>
    <g fill="#1d3036">
      <path d="M577 1824q10-16 50-14l20 14zM710 1810h60l-20 14h-30zM920 1822q20-14 50-12l10 14h-50zM985 1812h45l-20 12zM1104 1824q10-30 24 0zM1140 1824q8-20 18 0z" />
      <path d="M322 1808h3v16h-3zM470 1808h3v16h-3zM524 1824l8-14h3l-6 14zM670 1824l8-14h3l-6 14zM865 1808h3v16h-3zM1256 1808l10 16h-4l-9-16zM1308 1808h3v16h-3z" />
      <path d="M138 1964q12-14 28 0zM186 1950h24l6 14h-28zM268 1964q12-8 26 0zM294 1950h8v14h-8zM336 1952l12 12h-4l-10-12zM422 1950h3v14h-3zM655 1950l-4 14h-4l4-14zM690 1964q14-14 28-10l-6 10zM880 1952q30 14 50 12l50-10 20 10H900zM1095 1952h25l-4 8zM1160 1952h80l-10 12h-60zM1250 1952h20l-8 12zM1320 1952l12 12h-5zM1370 1964q10-14 26 0z" />
    </g>
    <path d="M517 1950h66v14h-28l-6-6-8 6h-20z" fill="#d9344b" />
    <path d="M1207 1808h34l-5 7h-24z" fill="#bf2f3b" />
    <path d="M1345 1808h90v16h-65z" fill="#87928f" />
    <path d="M1365 1812q30-8 60 0-10 8-30 6z" fill="#050505" />
    <path d="M1432 1808h8l-3 14z" fill="#050505" />
    <path d="M1450 1808h65l-15 12-4-6v10h-46z" fill="#9c2029" />
    <path d="M1510 1808h130l-30 16h-115z" fill="#7b8a8f" />
    <path d="M1500 1808h18l-7 13z" fill="#9c2029" />
    <path d="M1610 1824q12-12 24-16h400l22 16z" fill="#7b5d52" />
    <path d="M2030 1808h480v16h-456z" fill="#3c2e36" />
    <path d="M2503 1808h520v156h-600z" fill="#060305" />
    <path d="M2570 1808h70l5 16h-75zM2720 1808h50l14 16h-80zM2790 1808h55l15 16h-45z" fill="#503d48" />
    <path d="M2640 1808h65v6h-60z" fill="#0a2528" />
    <path d="M1490 1950h680l20 14h-700z" fill="#c08f7b" />
    <path d="M1455 1950h40l-6 14h-30z" fill="#20353a" />
    <path d="M1568 1952h42q-4 10-14 10-20 0-28-10z" fill="#d2293c" />
    <path d="M1624 1952h16l-3 12h-3zM1666 1952h5v12h-5z" fill="#081417" />
    <path d="M2170 1950h480l8 14h-470z" fill="#654d56" />
    <path d="M2650 1950h150v14h-140z" fill="#d03a4c" />
    <path d="M2752 1950l16 14h36l22-14z" fill="#3a0b1c" />
    <path d="M2826 1950h60l-10 14h-50z" fill="#5a4450" />
    <g fill="#2b0d20">
      <path d="M2930 1808h38l-22 84 30-10-20 60-76-60 40 10zM2900 1870l52 60-8 34-50-80z" />
    </g>
    <g fill="#c43a50">
      <path d="M2842 1808h55l8 60-24-22zM2900 1812l36-4-18 60 12-8-18 40zM2962 1808h38l-32 62zM3016 1818l-8 62-42 8 30-36zM2905 1868l30 22-25 10zM2934 1895l25 18-6 18-30-30z" />
    </g>
    <path d="M2945 1810 2938 1880M2965 1840l-22 50" stroke="#c43a50" strokeWidth="4" />
    <path d="M2996 1852h10l-4 112h-12zM2925 1920l24 44h-14l-20-40z" fill="#0b2a30" />
  </Wallpaper>
);

const menus: [string, number][] = [
  ["File", 84], ["Edit", 88], ["View", 100], ["History", 128], ["Bookmarks", 174],
  ["Profiles", 133], ["Tab", 84], ["Window", 138], ["Help", 80],
];

export default function App() {
  return (
    <>
      <Global />
      <Desktop>
        <WallpaperArt />
        <MenuBar>
          <AppleSlot><FaApple size={35} /></AppleSlot>
          <MenuItem $w={143} $bold>Chrome</MenuItem>
          {menus.map(([label, w]) => <MenuItem key={label} $w={w}>{label}</MenuItem>)}
          <MenuSpacer />
          <Tray>
            <Battery />
            <Wifi />
            <Search />
            <Control />
            <Clock>Sun Sep 4  5:52 PM</Clock>
          </Tray>
        </MenuBar>

        <Browser>
          <TabStrip>
            <Lights><Light $c="#ed6a5e" /><Light $c="#f4be4f" /><Light $c="#61c554" /></Lights>
            <Tab>
              <Favicon><ModuleIcon /></Favicon>
              <TabTitle>Module 2 Challenge</TabTitle>
              <TabClose><CloseX /></TabClose>
            </Tab>
            <Tab $active>
              <Favicon><WireIcon /></Favicon>
              <TabTitle $fade>Wireframe.cc – the go-to free,</TabTitle>
              <TabClose><CloseX /></TabClose>
            </Tab>
            <Tab $sep>
              <Favicon><FaGithub size={33} color="#24292f" /></Favicon>
              <TabTitle>CRMclaughlin/landing-page</TabTitle>
              <TabClose><CloseX /></TabClose>
            </Tab>
            <Tab $sep>
              <Favicon><FaGithub size={33} color="#24292f" /></Favicon>
              <TabTitle>Pages</TabTitle>
              <TabClose><CloseX /></TabClose>
            </Tab>
            <Tab $sep>
              <Favicon><Globe /></Favicon>
              <TabTitle>My Landing Page</TabTitle>
              <TabClose><CloseX /></TabClose>
            </Tab>
            <StripTail>
              <svg width="24" height="24" viewBox="0 0 24 24" stroke="#3c4043" strokeWidth="3.400"><path d="M12 0v24M0 12h24" /></svg>
              <svg width="20" height="14" viewBox="0 0 20 14" fill="none" stroke="#3c4043" strokeWidth="3"><path d="m1.500 2.500 8.500 8.500 8.500-8.500" /></svg>
            </StripTail>
          </TabStrip>

          <NavBar>
            <NavButtons>
              <BackArrow c="#5a5e63" />
              <BackArrow c="#b9bbbe" flip />
              <Reload />
            </NavButtons>
            <Omnibox>
              <MdLock size={26} color="#5f6368" />
              <Url>wireframe.cc<span>/F49dW3</span></Url>
              <OmniActions>
                <Share />
                <MdStarOutline size={35} color="#5f6368" />
              </OmniActions>
            </Omnibox>
            <Extensions>
              <MdExtension size={34} color="#5f6368" />
              <Cluster $ml={7}><SidePanel /></Cluster>
              <Cluster $ml={2}><Avatar>C</Avatar></Cluster>
              <Cluster $ml={13}><Dots /></Cluster>
            </Extensions>
          </NavBar>

          <AppBar>
            <FrameIcon />
            <Cluster $ml={16}>
              <svg width="17" height="12" viewBox="0 0 17 12" fill="none" stroke="#c9cccc" strokeWidth="2.200"><path d="m1 2 7.500 8L16 2" /></svg>
            </Cluster>
            <Brand>wireframe<Caret />cc</Brand>
            <Cluster $gap={2}>
              <ToolButton $w={68} $side="l" $nudge={4}><Undo /></ToolButton>
              <ToolButton $w={68} $side="r" $nudge={-3}><Undo flip /></ToolButton>
            </Cluster>
            <Cluster $ml={830} $gap={52}>
              <LockGlyph />
              <LayersGlyph />
              <AlignGlyph />
            </Cluster>
            <Cluster $ml={39}><GroupGlyph /></Cluster>
            <MenuSpacer />
            <Cluster $gap={12}>
              <ToolButton $w={68}><CommentGlyph /></ToolButton>
              <ToolButton $w={160} $bg="#b35c4e" $nudge={-8}><CloudGlyph />Save</ToolButton>
              <ToolButton $w={68}><SlidersGlyph /></ToolButton>
            </Cluster>
            <Cluster $ml={32} $gap={31}>
              <Burger />
              <SignUp>Sign Up</SignUp>
            </Cluster>
          </AppBar>

          <Workspace>
            <Frame>
              <FrameHead><FrameDot /><FrameDot /><FrameDot /></FrameHead>
              <Canvas>
                <NavBlock>
                  <AccountBadge />
                  <NavLinks><span>About</span><span>Contact</span></NavLinks>
                </NavBlock>
                <Placed $x={1158} $y={178} $w={790} $h={796}><Portrait /></Placed>
                <Placed $x={186} $y={473} $w={920} $h={64}><Heading>Hello I'm Christopher McLaughlin</Heading></Placed>
                <Placed $x={214} $y={596} $w={900} $h={174}>
                  <Copy>
                    Lorem ipsum dolor sit amet et delectus accommodare<br />
                    his consul copiosae legendos at vix ad putent delectus<br />
                    delicata usu. Vidit dissentiet eos cu eum an brute<br />
                    copiosae hendrerit. Eos erant dolorum an. Per facer
                  </Copy>
                </Placed>
                <Placed $x={186} $y={808} $w={762} $h={88}>
                  <svg width="762" height="88" viewBox="0 0 762 88" fill="#fff" stroke="#444" strokeWidth="2">
                    <rect x="1" y="1" width="760" height="86" />
                    <path d="M1 1 761 87M761 1 1 87" />
                  </svg>
                </Placed>
                <Placed $x={214} $y={816} $w={72} $h={72}><FaTwitter size={72} /></Placed>
                <Placed $x={358} $y={825} $w={108} $h={54}>
                  <svg width="108" height="54" viewBox="0 0 108 54" fill="#444">
                    <path
                      fillRule="evenodd"
                      d="M4 0h100q4 0 4 4v46q0 4-4 4H4q-4 0-4-4V4q0-4 4-4zM14 10q-3 0-3 3v9q0 3 3 3h35q3 0 3-3v-9q0-3-3-3zM12 30v2q0 2 2 2h1q2 0 2-2v-2q0-2-2-2h-1q-2 0-2 2zM23 30v2q0 2 2 2h1q2 0 2-2v-2q0-2-2-2h-1q-2 0-2 2zM34 30v2q0 2 2 2h1q2 0 2-2v-2q0-2-2-2h-1q-2 0-2 2zM45 30v2q0 2 2 2h1q2 0 2-2v-2q0-2-2-2h-1q-2 0-2 2zM11 41v4h41v-4zM57 41v4h41v-4z"
                    />
                  </svg>
                </Placed>
                <Placed $x={598} $y={806} $w={92} $h={92}><FaInstagramSquare size={92} /></Placed>
                <Placed $x={818} $y={812} $w={80} $h={80}><FaLinkedin size={80} /></Placed>
              </Canvas>
            </Frame>
            <ScrollThumb />
            <StatusBar>
              <Stat><b>X:</b> 947 px</Stat>
              <Stat><b>Y:</b> 581 px</Stat>
              <Stat><b>W:</b> 0 px</Stat>
              <Stat><b>H:</b> 0 px</Stat>
            </StatusBar>
          </Workspace>
        </Browser>

        <DockArea>
          <DockShelf>
            {dockApps.map((app) =>
              app.rule ? (
                <DockRule key={app.id} />
              ) : (
                <DockSlot key={app.id} $running={app.running}>
                  {app.bg ? <Tile $bg={app.bg}>{app.art}</Tile> : app.id === "trash" ? <TrashLift>{app.art}</TrashLift> : app.art}
                </DockSlot>
              )
            )}
          </DockShelf>
        </DockArea>
      </Desktop>
    </>
  );
}
